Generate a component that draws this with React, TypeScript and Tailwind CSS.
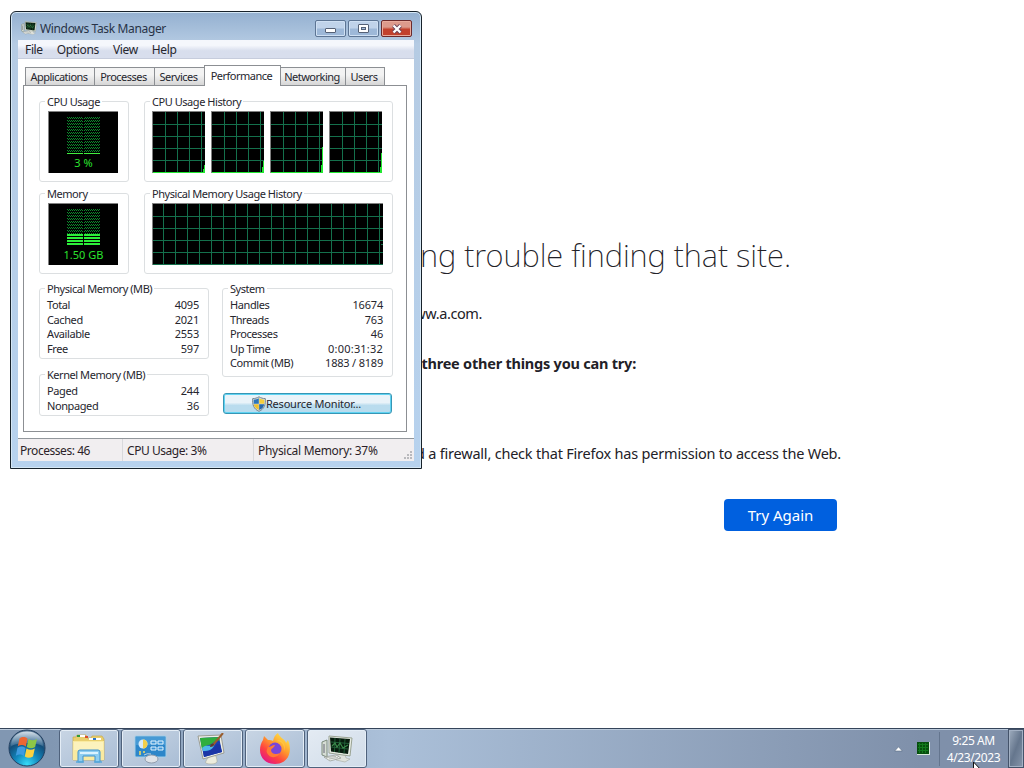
import React from 'react';

const TABS = [
  { label: 'Applications', width: 'w-[70px]' },
  { label: 'Processes', width: 'w-[61px]' },
  { label: 'Services', width: 'w-[51px]' },
  { label: 'Performance', width: 'w-[77px]', active: true },
  { label: 'Networking', width: 'w-[66px]' },
  { label: 'Users', width: 'w-[40px]' },
];

const PHYSICAL = [
  ['Total', '4095'],
  ['Cached', '2021'],
  ['Available', '2553'],
  ['Free', '597'],
];

const KERNEL = [
  ['Paged', '244'],
  ['Nonpaged', '36'],
];

const SYSTEM = [
  ['Handles', '16674'],
  ['Threads', '763'],
  ['Processes', '46'],
  ['Up Time', '0:00:31:32'],
  ['Commit (MB)', '1883 / 8189'],
];

const CPU_TRACES = [
  'M0 60.5H50.5V57M51.5 53V61',
  'M0 60.5H50.5V55M51.5 49V61',
  'M0 60.5H50.5V53M51.5 35V61',
  'M0 60.5H50.5V55M51.5 41V61',
];

const CPU_LINES = [13, 25, 37, 49];
const MEM_LINES = Array.from({ length: 19 }, (_, i) => 11 + i * 12);
const ROW_LINES = [13, 25, 37, 49];

interface GroupProps {
  title: string;
  className: string;
  children: React.ReactNode;
}

const Group: React.FC<GroupProps> = ({ title, className, children }) => (
  <section className={`border border-[#dcdfe1] rounded-[3px] px-[7px] ${className}`}>
    <h2 className="w-fit h-[14px] -mt-[7px] -ml-[2px] px-[2px] bg-white leading-[14px] tracking-[-0.45px] whitespace-nowrap">{title}</h2>
    {children}
  </section>
);

const Rows: React.FC<{ rows: string[][] }> = ({ rows }) => (
  <dl className="pt-[2px]">
    {rows.map(([label, value]) => (
      <div key={label} className="flex justify-between h-[14.6px] leading-[14.6px]">
        <dt className="tracking-[-0.4px]">{label}</dt>
        <dd className={value.includes(':') ? 'tracking-[0.2px]' : 'tracking-[-0.2px]'}>{value}</dd>
      </div>
    ))}
  </dl>
);

const Meter: React.FC<{ id: string; text: string; used: number }> = ({ id, text, used }) => (
  <div className="w-[70px] h-[62px] mt-[2px] ml-px bg-black border-t border-l border-[#808080] flex flex-col items-start pt-[5px]">
    <svg className="ml-[18px]" width="33" height="37" shapeRendering="crispEdges">
      <defs>
        <pattern id={id} width="2" height="3" patternUnits="userSpaceOnUse">
          <rect width="1" height="1" fill="#0c8a2c" />
          <rect x="1" y="1" width="1" height="1" fill="#0c8a2c" />
        </pattern>
      </defs>
      <rect width="33" height="37" fill={`url(#${id})`} />
      {used === 1 ? (
        <rect y="36" width="33" height="1" fill="#3ff03f" />
      ) : (
        <>
          <rect y={37 - used * 3} width="33" height={used * 3} fill="#000" />
          {Array.from({ length: used }, (_, i) => (
            <rect key={i} y={37 - (i + 1) * 3} width="33" height="2" fill="#2cf03a" />
          ))}
        </>
      )}
      <rect x="16" width="1" height="37" fill="#000" />
    </svg>
    <span className="w-full text-center text-[#2be32f] leading-[14px] mt-[2px]">{text}</span>
  </div>
);

const Chart: React.FC<{ width: number; lines: number[]; trace: string; color?: string }> = ({ width, lines, trace, color = '#22e832' }) => (
  <div className="border-t border-l border-[#808080] bg-black">
    <svg className="block" width={width} height="61" shapeRendering="crispEdges">
      {lines.map((x) => (
        <rect key={x} x={x - 1} width="1" height="61" fill="#14704c" />
      ))}
      {ROW_LINES.map((y) => (
        <rect key={y} y={y - 1} width={width} height="1" fill="#14704c" />
      ))}
      <path d={trace} fill="none" stroke={color} />
    </svg>
  </div>
);

const MonitorIcon: React.FC<{ size: number }> = ({ size }) => (
  <svg width={size} height={size} viewBox="0 0 32 32">
    <path d="M1 9l5-2v17l-5-2z" fill="#d6ddd5" stroke="#7c8b7d" />
    <path d="M3 11v9" stroke="#667" />
    <path d="M17 20l7 1 1 4 4 1-5 3-9-2 2-3z" fill="#dfe2dc" stroke="#a4aaa0" strokeWidth=".6" />
    <path d="M8 3l23 2-2 18-21-3z" fill="#e8ede3" stroke="#9aa394" />
    <path d="M9 4.500l20 1.500-2 15-17-2.500z" fill="#081c0e" />
    <path d="M10 9l18 1.500M10 14l17 2M14 5l-.5 14M19 5.500l-1 14.500M24 6l-1 14.500" stroke="#23633a" strokeWidth=".9" />
    <path d="M11 13l3-3 2 4 3-4 3 5 5-3" fill="none" stroke="#3c8a4b" strokeWidth="1.200" />
    <path d="M3 24l12-2 5 3-11 3z" fill="#eef0ec" stroke="#8f958e" strokeWidth=".7" />
    <path d="M5 24.500l10-1M8 26l9-1.500" stroke="#8f958e" strokeWidth=".6" />
  </svg>
);

const ShieldIcon = () => (
  <svg className="-mr-px" width="16" height="16" viewBox="0 0 16 16">
    <path d="M8 .8C10 2 12 2.600 14.300 2.600c.5 6-1 10.500-6.300 12.700C2.700 13.100 1.200 8.600 1.700 2.600 4 2.600 6 2 8 .8z" fill="#d8dfe5" stroke="#75858f" />
    <path d="M7.800 2.300v5.500H2.700V3.700C4.600 3.600 6.300 3.100 7.800 2.300z" fill="#2c76b9" />
    <path d="M8.200 2.300v5.500h5.100V3.700c-1.900-.1-3.600-.6-5.100-1.400z" fill="#f5ce3c" />
    <path d="M2.800 8.200h5v5.900c-3-1.300-4.600-3.300-5-5.900z" fill="#eec12f" />
    <path d="M13.200 8.200h-5v5.900c3-1.300 4.600-3.300 5-5.900z" fill="#2769ac" />
  </svg>
);

const StartOrb = () => (
  <svg width="38" height="38" viewBox="0 0 38 38">
    <defs>
      <radialGradient id="orb" cx=".5" cy=".95" r=".85">
        <stop offset="0" stopColor="#37dcf8" />
        <stop offset=".4" stopColor="#1287bd" />
        <stop offset=".75" stopColor="#134f7b" />
        <stop offset="1" stopColor="#5b7b98" />
      </radialGradient>
      <linearGradient id="gloss" x1="0" y1="0" x2="0" y2="1">
        <stop offset="0" stopColor="#e7eff6" stopOpacity=".85" />
        <stop offset="1" stopColor="#8fb2cd" stopOpacity=".25" />
      </linearGradient>
    </defs>
    <circle cx="19" cy="19" r="18" fill="url(#orb)" stroke="#233f60" />
    <path d="M3 17C3 7 11 2.500 19 2.500S35 7 35 17c-8-4-24-4-32 0z" fill="url(#gloss)" />
    <path d="M11.500 9.500c3-2 5-1.800 8 0l-1.700 8c-3-1.800-5-2-8-.3z" fill="#ec6733" />
    <path d="M20.500 10c3 1.800 5.500 1.800 8.500 0l-1.900 8c-3 1.800-5.300 1.600-8.300 0z" fill="#8dc747" />
    <path d="M9.500 18.800c3-1.800 5-1.600 8 .2l-1.700 8c-3-1.800-5-1.800-8-.3z" fill="#3f9be0" />
    <path d="M18.500 19.500c3 1.700 5.400 1.700 8.300 0l-1.800 8c-3 1.700-5.300 1.700-8.200 0z" fill="#fbd140" />
  </svg>
);

const ExplorerIcon = () => (
  <svg width="34" height="32" viewBox="0 0 34 32">
    <path d="M1 4h3l1-2h9l1 3h4l1-2h10l2 3v21H1z" fill="#e9cf6e" stroke="#c9a94d" strokeWidth=".7" />
    <path d="M5 3h8M17 6h12" stroke="#fff" strokeWidth="2" />
    <path d="M5 3h3" stroke="#2c9a3d" strokeWidth="2" />
    <path d="M13 4h3" stroke="#d94c2e" strokeWidth="2" />
    <path d="M21 6h3" stroke="#2b73c7" strokeWidth="2" />
    <path d="M1 8h31v19H1z" fill="#f9eaa0" />
    <path d="M2 9h29v8H2z" fill="#fcf2bd" />
    <path d="M6 29V19q0-2 2-2h18q2 0 2 2v10h-5v-6H11v6z" fill="#8dcdf0" stroke="#3e92cc" />
    <path d="M8 20h18" stroke="#d9f2ff" strokeWidth="2" />
    <path d="M4 29h8M22 29h8" stroke="#5aa9dc" strokeWidth="1.500" />
  </svg>
);

const ControlPanelIcon = () => (
  <svg width="34" height="30" viewBox="0 0 34 30">
    <rect x="1" y="2" width="31" height="21" rx="1" fill="#2d86c9" stroke="#a3cfe9" />
    <path d="M2 3h29v8H2z" fill="#57a8dd" opacity=".6" />
    <circle cx="9" cy="10" r="4.500" fill="#d5eafa" />
    <path d="M9 10V5.500A4.500 4.500 0 0 1 9 14.500z" fill="#f1cf4a" />
    <path d="M17 7h5v3h-5zM24 7h5v3h-5zM17 13h5v3h-5zM24 13h5v3h-5z" fill="#3b93d4" stroke="#e3f4ff" />
    <path d="M5 18h2M9 18h2M5 20h2" stroke="#f3dc62" strokeWidth="1.500" />
    <ellipse cx="17.500" cy="25" rx="6.500" ry="4" fill="#dfe3e8" stroke="#919dad" />
    <path d="M17 20q-4-1-7 1" stroke="#c5d1dc" fill="none" />
  </svg>
);

const DisplayIcon = () => (
  <svg width="32" height="32" viewBox="0 0 32 32" className="-ml-[4px]">
    <path d="M12 26l5-4 4 1 1 4q1 4-6 4t-5-3z" fill="#ececdd" stroke="#a6a898" strokeWidth=".6" />
    <path d="M3 3l23-1 3 18-21 6z" fill="#eeeee6" stroke="#9b9d93" />
    <path d="M5 5l19-1 3 15-18 5z" fill="#183fb4" />
    <path d="M5 5l19-1 .8 4c-5-2-7 4-11 4-3 0-4 3-7 4z" fill="#2fae3c" />
    <path d="M7 15c5-5 8 1 13-6-1 8-6 9-12 9z" fill="#4fb8e6" />
    <path d="M8 19c6-1 10-1 14-8l3 .5 2 7.500-18 5z" fill="#1b35a6" />
    <path d="M18 12L28 0" stroke="#9a5d2d" strokeWidth="2" />
    <path d="M15 14c0-3 2-4 4-3 0 2-1 3-4 3z" fill="#643c2b" />
  </svg>
);

const FirefoxIcon = () => (
  <svg width="32" height="32" viewBox="0 0 32 32">
    <defs>
      <linearGradient id="fox" x1=".85" y1=".05" x2=".2" y2=".95">
        <stop offset="0" stopColor="#ffe949" />
        <stop offset=".4" stopColor="#ff9a2d" />
        <stop offset=".7" stopColor="#ff443f" />
        <stop offset="1" stopColor="#e31587" />
      </linearGradient>
    </defs>
    <path d="M19 0c1 4 8 7 8 10l2-3c5 12 0 24-13 24C7 31 1 25 1 17c0-4 1-7 3-10l1-4 4 4c2 0 4 0 5 1 1-4 2-6 5-8z" fill="url(#fox)" />
    <circle cx="16" cy="16" r="6.500" fill="#7a46d8" />
    <path d="M9 14c3 0 4-2 7-2-1 3-3 3-4 5 0 4 5 5 9 3-2 5-10 6-13 0-1-2 0-4 1-6z" fill="#ff7a35" />
    <path d="M17 8c6 0 9 4 8 10 2-5 0-10-5-11z" fill="#ffc640" />
  </svg>
);

const TASKS = [
  { name: 'Windows Explorer', icon: <ExplorerIcon /> },
  { name: 'Control Panel', icon: <ControlPanelIcon /> },
  { name: 'Display', icon: <DisplayIcon /> },
  { name: 'Firefox', icon: <FirefoxIcon /> },
  { name: 'Task Manager', icon: <MonitorIcon size={32} />, active: true },
];

const ErrorPage = () => (
  <main className="flex-1 pl-[410px] text-[#222127] text-[14.5px] font-['Noto_Sans','Open_Sans',sans-serif] whitespace-nowrap">
    <h1 className="w-[381px] pt-[233px] h-[277px] flex justify-end text-[31px] leading-[44px] font-extralight tracking-[-0.06px]">ng trouble finding that site.</h1>
    <p className="w-[72px] mt-[26px] h-5 leading-5 text-right tracking-[-0.4px]">ww.a.com.</p>
    <p className="w-[226px] mt-[30px] h-5 leading-5 text-right font-bold tracking-[-0.22px]">three other things you can try:</p>
    <p className="w-[431px] mt-[70px] h-5 leading-5 flex justify-end tracking-[-0.21px]">d a firewall, check that Firefox has permission to access the Web.</p>
    <button className="block w-[113px] h-8 mt-[36px] ml-[314px] rounded-[4px] bg-[#0060df] text-white text-[15px] leading-8">Try Again</button>
  </main>
);

const TaskManager = () => (
  <div className="absolute left-[10px] top-[11px] w-[412px] h-[458px] border border-[#17222b] rounded-t-[6px] shadow-[inset_0_0_0_1px_#d5e7f5] overflow-hidden px-[7px] flex flex-col text-[#26262e] whitespace-nowrap bg-linear-to-b from-[#94b0d0] from-0% via-[#b5cbe3] via-[7%] to-[#b7d2ee]">
    {/* Title bar */}
    <header className="h-[28px] shrink-0 flex items-start pl-[3px] font-['Noto_Sans','Open_Sans',sans-serif] text-[12px]">
      <div className="mt-[8px]"><MonitorIcon size={16} /></div>
      <h1 className="ml-[3px] mt-[8px] leading-[18px] tracking-[-0.35px] text-[#283347]">Windows Task Manager</h1>
      <div className="ml-auto mr-[2px] mt-[8px] flex gap-[2px]">
        <button className="w-[31px] h-[17px] border border-[#5d7594] rounded-[2px] bg-linear-to-b from-[#c0d3ea] from-45% to-[#9db8d8] to-55% shadow-[inset_0_0_0_1px_#cfe0f3] flex items-center justify-center">
          <span className="w-[11px] h-[5px] mt-[4px] bg-white border border-[#556176] rounded-[1px]"></span>
        </button>
        <button className="w-[31px] h-[17px] border border-[#5d7594] rounded-[2px] bg-linear-to-b from-[#c0d3ea] from-45% to-[#9db8d8] to-55% shadow-[inset_0_0_0_1px_#cfe0f3] flex items-center justify-center">
          <span className="w-[11px] h-[9px] bg-white border border-[#556176] rounded-[1px] flex items-center justify-center">
            <span className="w-[5px] h-[3px] border border-[#556176] bg-[#a4bbda]"></span>
          </span>
        </button>
        <button className="w-[31px] h-[17px] border border-[#6b2a2c] rounded-[2px] bg-linear-to-b from-[#dd9a8c] from-40% to-[#c2412d] to-55% shadow-[inset_0_0_0_1px_#e9ab9c] flex items-center justify-center">
          <svg width="12" height="10" viewBox="0 0 12 10">
            <path d="M2.500 1.500l7 7M9.500 1.500l-7 7" stroke="#69445a" strokeWidth="4" />
            <path d="M2.500 1.500l7 7M9.500 1.500l-7 7" stroke="#fff" strokeWidth="2.300" />
          </svg>
        </button>
      </div>
    </header>

    <nav className="h-[19px] shrink-0 flex gap-[14px] pl-[7px] leading-[19px] font-['Noto_Sans','Open_Sans',sans-serif] text-[12px] tracking-[-0.35px] bg-linear-to-b from-[#f5f7fc] from-30% to-[#d8deed] to-60% border-b border-[#c6ccdc]">
      <span>File</span>
      <span>Options</span>
      <span>View</span>
      <span>Help</span>
    </nav>

    <div className="flex-1 bg-white px-[5px] pt-[6px] font-['Noto_Sans','DejaVu_Sans',sans-serif] text-[11px]">
      <div className="flex items-end h-[20px] pl-[2px]">
        {TABS.map((tab) => (
          <div
            key={tab.label}
            className={`${tab.width} -mr-px pr-[2px] border border-b-0 border-[#8c8f93] text-center tracking-[-0.5px] ${
              tab.active ? 'h-[21px] -mb-px bg-white leading-[19px] relative' : 'h-[18px] bg-linear-to-b from-[#f3f3f3] from-40% to-[#d6d6d6] leading-[18px]'
            }`}
          >
            {tab.label}
          </div>
        ))}
      </div>

      <div className="w-[384px] h-[347px] border border-[#8c8f93] pt-[15px] pl-[15px]">
        <div className="flex gap-[15px]">
          <Group title="CPU Usage" className="w-[90px] h-[81px]">
            <Meter id="cpuHatch" text="3 %" used={1} />
          </Group>
          <Group title="CPU Usage History" className="w-[249px] h-[81px]">
            <div className="flex gap-[6px] mt-[2px]">
              {CPU_TRACES.map((trace, i) => (
                <Chart key={i} width={52} lines={CPU_LINES} trace={trace} />
              ))}
            </div>
          </Group>
        </div>

        <div className="flex gap-[15px] mt-[11px]">
          <Group title="Memory" className="w-[90px] h-[81px]">
            <Meter id="memHatch" text="1.50 GB" used={4} />
          </Group>
          <Group title="Physical Memory Usage History" className="w-[249px] h-[81px]">
            <div className="flex mt-[2px]">
              <Chart width={230} lines={MEM_LINES} trace="M0 60.5H231M228 40.5H231" color="#14704c" />
            </div>
          </Group>
        </div>

        <div className="flex gap-[13px] mt-[14px]">
          <div className="w-[170px]">
            <Group title="Physical Memory (MB)" className="h-[71px] pr-[9px]">
              <Rows rows={PHYSICAL} />
            </Group>
            <Group title="Kernel Memory (MB)" className="h-[42px] mt-[15px] pr-[9px]">
              <Rows rows={KERNEL} />
            </Group>
          </div>
          <div className="w-[171px]">
            <Group title="System" className="h-[89px] pr-[9px]">
              <Rows rows={SYSTEM} />
            </Group>
            <button className="w-[169px] h-[21px] mt-[16px] ml-px pr-[3px] border border-[#3796b5] rounded-[3px] shadow-[inset_0_0_0_1px_#5fd3f2] bg-linear-to-b from-[#e9f3f9] from-45% to-[#b9dcee] to-60% flex items-center justify-center tracking-[-0.2px]">
              <ShieldIcon />
              <span className="pt-px">Resource Monitor...</span>
            </button>
          </div>
        </div>
      </div>
    </div>

    <footer className="h-[23px] mb-[7px] shrink-0 border-t border-[#92979c] bg-[#f1eef0] flex leading-[23px] text-[12px] tracking-[-0.45px] font-['Noto_Sans','Open_Sans',sans-serif] text-[#2c1f29]">
      <div className="w-[105px] pl-[2px] border-r border-[#d9d9dc]">Processes: 46</div>
      <div className="w-[131px] pl-[4px] border-r border-[#d9d9dc]">CPU Usage: 3%</div>
      <div className="flex-1 pl-[4px] flex justify-between tracking-[-0.3px]">
        <span>Physical Memory: 37%</span>
        <svg width="11" height="11" fill="#b9b9bd" className="self-end">
          <path d="M7 1h2v2H7zM4 4h2v2H4zM7 4h2v2H7zM1 7h2v2H1zM4 7h2v2H4zM7 7h2v2H7z" />
        </svg>
      </div>
    </footer>
  </div>
);

const Taskbar = () => (
  <footer className="h-[40px] shrink-0 flex bg-linear-to-r from-[#8197b2] from-5% via-[#abc0d9] via-38% to-[#7f90aa] to-90% border-t border-[#35445a] shadow-[inset_0_1px_0_#bccbdc] overflow-hidden">
    <div className="w-[59px] pl-[8px]"><StartOrb /></div>
    <div className="flex gap-[2px]">
      {TASKS.map((task) => (
        <button
          key={task.name}
          aria-label={task.name}
          className={`w-[60px] h-[39px] border border-[#4f627c] rounded-[3px] shadow-[inset_0_0_0_1px_#e4edf6] flex items-center justify-center ${
            task.active ? 'bg-linear-to-br from-[#e4ebf3] to-[#d0dce9]' : 'bg-linear-to-br from-[#c8d5e4] to-[#a9bdd5]'
          }`}
        >
          {task.icon}
        </button>
      ))}
    </div>
    <div className="ml-auto flex items-center text-white font-['Noto_Sans','Open_Sans',sans-serif] text-[12px]">
      <svg width="9" height="6" viewBox="0 0 9 6" className="mr-[14px]">
        <path d="M4.500 .8L8.300 5H.7z" fill="#fff" stroke="#596b84" strokeWidth=".6" />
      </svg>
      <svg width="13" height="13" shapeRendering="crispEdges" className="mr-[9px]">
        <rect width="13" height="13" fill="#d8eadb" />
        <rect width="12" height="12" fill="#064f0d" />
        <path d="M2.500 1v10M5.500 1v10M8.500 1v10M1 2.500h10M1 5.500h10M1 8.500h10" stroke="#127a1c" />
      </svg>
      <div className="w-px h-[34px] bg-[#64758e]"></div>
      <div className="w-[68px] pr-px text-center leading-[17px] tracking-[-0.4px]">
        <div>9:25 AM</div>
        <div>4/23/2023</div>
      </div>
      <div className="w-[16px] h-full border border-[#44536a] bg-linear-to-br from-[#a0aebf] via-[#65768d] to-[#8796ab] shadow-[inset_0_0_0_1px_#a3b1c4]"></div>
    </div>
  </footer>
);

const App: React.FC = () => (
  <div className="relative w-[1024px] h-[768px] overflow-hidden bg-white flex flex-col">
    <ErrorPage />
    <Taskbar />
    <TaskManager />
    {/* Mouse pointer */}
    <svg className="absolute left-[973px] top-[762px]" width="10" height="6" viewBox="0 0 10 6">
      <path d="M.5 0v14L9.500 9.500z" fill="#fff" stroke="#111" />
    </svg>
  </div>
);

export default App;
